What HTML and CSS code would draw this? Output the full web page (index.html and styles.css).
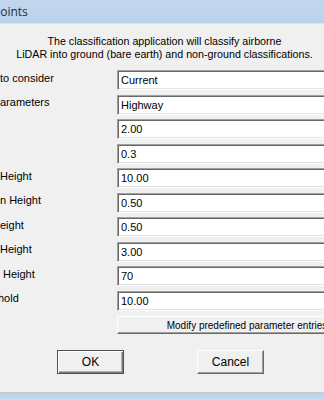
FILE: index.html
```html
<!DOCTYPE html>
<html>
<head>
<meta charset="utf-8">
<link rel="stylesheet" href="styles.css">
</head>
<body>
<div class="window">
  <div class="titlebar"><span class="title">Points</span></div>
  <div class="dialog">
    <p class="desc">The classification application will classify airborne<br>LiDAR into ground (bare earth) and non-ground classifications.</p>
    <div class="form">
      <span class="label">to consider</span><div class="field">Current</div>
      <span class="label">arameters</span><div class="field">Highway</div>
      <span class="label"></span><div class="field">2.00</div>
      <span class="label"></span><div class="field">0.3</div>
      <span class="label">Height</span><div class="field">10.00</div>
      <span class="label">n Height</span><div class="field">0.50</div>
      <span class="label">eight</span><div class="field">0.50</div>
      <span class="label">Height</span><div class="field">3.00</div>
      <span class="label ind">Height</span><div class="field">70</div>
      <span class="label cut">hold</span><div class="field">10.00</div>
      <span class="label"></span><button class="modify">Modify predefined parameter entries</button>
    </div>
    <div class="actions">
      <button class="btn default">OK</button>
      <button class="btn">Cancel</button>
    </div>
  </div>
  <div class="frame-bottom"></div>
</div>
</body>
</html>
```
FILE: styles.css
```css
* { box-sizing: border-box; }
html, body { margin: 0; padding: 0; }
body {
  width: 324px;
  height: 400px;
  overflow: hidden;
  background: #f0f0f0;
  font-family: "Liberation Sans", Arial, sans-serif;
  font-size: 11px;
  color: #000;
}
.window {
  width: 324px;
  height: 400px;
  display: flex;
  flex-direction: column;
  overflow: hidden;
}
.titlebar {
  height: 24px;
  flex: none;
  background: linear-gradient(#c2d7ee, #b9d1eb);
  border-bottom: 1px solid #d9e5f2;
  display: flex;
  align-items: center;
  overflow: hidden;
}
.title {
  font-family: "Open Sans", "Noto Sans", sans-serif;
  font-size: 12px;
  margin-left: -7px;
  color: #1e2b3a;
}
.dialog {
  flex: 1;
  background: #f0f0f0;
  overflow: hidden;
  border-bottom: 1px solid #c9c9c9;
}
.desc {
  margin: 11px 0 0 0;
  width: 329px;
  text-align: center;
  line-height: 13px;
  font-size: 10.7px;
}
.form {
  margin-top: 9px;
  display: grid;
  grid-template-columns: 117px 290px;
  grid-auto-rows: 20px;
  row-gap: 4.5px;
  align-items: center;
}
.label {
  white-space: nowrap;
  margin-top: -5px;
}
.label.ind { padding-left: 3px; }
.label.cut { margin-left: -2px; }
.field {
  height: 20px;
  background: #fff;
  border-top: 1px solid #a0a0a0;
  border-left: 1px solid #a0a0a0;
  border-bottom: 1px solid #fff;
  border-right: 1px solid #fff;
  box-shadow: inset 1px 1px 0 #696969, inset -1px -1px 0 #e3e3e3;
  padding: 3px 0 0 3px;
  font-size: 11px;
}
.modify {
  height: 18px;
  width: 260px;
  margin-top: 1px;
  align-self: start;
  font-family: inherit;
  font-size: 10px;
  padding: 0;
  background: #f0f0f0;
  border-top: 1px solid #fff;
  border-left: 1px solid #fff;
  border-right: 1px solid #696969;
  border-bottom: 1px solid #696969;
  box-shadow: inset -1px -1px 0 #a0a0a0;
  text-align: center;
  color: #000;
}
.actions {
  margin-top: 15px;
  display: flex;
  padding-left: 57px;
  gap: 73px;
}
.btn {
  width: 67px;
  height: 24px;
  font-family: inherit;
  font-size: 12px;
  background: #f0f0f0;
  border-top: 1px solid #fff;
  border-left: 1px solid #fff;
  border-right: 1px solid #696969;
  border-bottom: 1px solid #696969;
  box-shadow: inset -1px -1px 0 #a0a0a0;
  padding: 0;
  color: #000;
}
.btn.default {
  border: 1px solid #505050;
  box-shadow: inset 1px 1px 0 #fff, inset -1px -1px 0 #7a7a7a, inset -2px -2px 0 #b0b0b0;
}
.frame-bottom {
  height: 7px;
  flex: none;
  background: linear-gradient(#b7d3ee, #c6dcf1);
}
```
